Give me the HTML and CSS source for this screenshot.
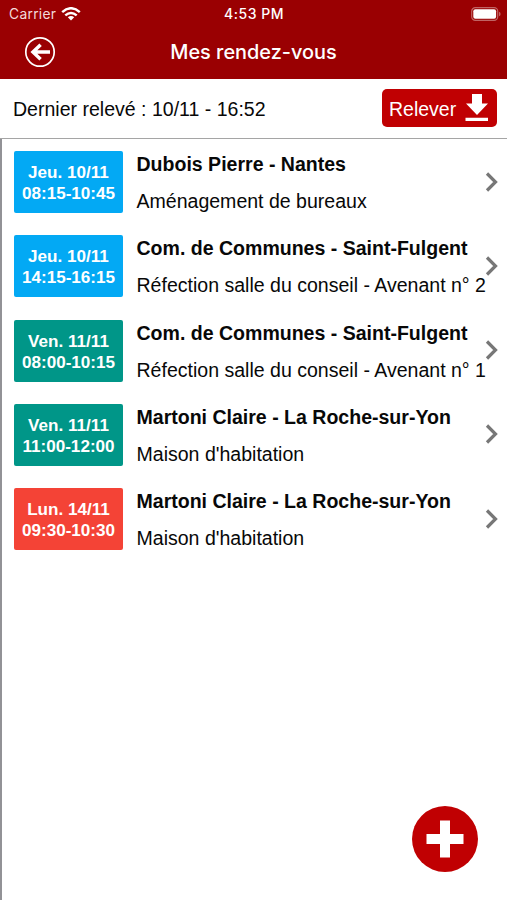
FILE: index.html
```html
<!DOCTYPE html>
<html lang="fr">
<head>
<meta charset="utf-8">
<title>Mes rendez-vous</title>
<link rel="stylesheet" href="styles.css">
</head>
<body>
<header class="header">
  <div class="status">
    <div class="carrier"><span class="carrier-name">Carrier</span>
      <svg class="wifi" width="20" height="14" viewBox="0 0 20 14" fill="none" stroke="#fff" stroke-width="2.5"><path d="M1.2 5.1Q10-2.6 18.8 5.1M4.3 8.4Q10 3.5 15.7 8.4"/><path d="M10 13.4L6.8 10.3Q10 7.7 13.2 10.3Z" fill="#fff" stroke="none"/></svg>
    </div>
    <span class="clock">4:53 PM</span>
    <svg class="battery" width="30" height="14" viewBox="0 0 30 14"><rect x=".7" y=".7" width="26" height="12.6" rx="3.6" fill="none" stroke="#c06464" stroke-width="1.2"/><rect x="2.3" y="2.3" width="22.8" height="9.4" rx="2" fill="#fff"/><path d="M28 4.7q1.6.6 1.6 2.3T28 9.300z" fill="#c06464"/></svg>
  </div>
  <nav class="nav">
    <svg class="back" width="32" height="32" viewBox="0 0 32 32" fill="none" stroke="#fff"><circle cx="16" cy="16" r="14.2" stroke-width="1.7"/><path d="M26 16H9M16.600 8.800L9 16L16.600 23.200" stroke-width="3.500"/></svg>
    <h1 class="title">Mes rendez-vous</h1>
  </nav>
</header>
<section class="sync">
  <span class="sync-label">Dernier relevé : 10/11 - 16:52</span>
  <button class="sync-button"><span>Relever</span>
    <svg width="24" height="28" viewBox="0 0 24 28" fill="#fff"><path d="M7 0H17V9.500H23L12 21L1 9.500H7ZM.5 23.700H23V27H.5Z"/></svg>
  </button>
</section>
<main class="list">
  <article class="row">
    <div class="slot blue"><span>Jeu. 10/11</span><span>08:15-10:45</span></div>
    <div class="info"><h2>Dubois Pierre - Nantes</h2><p>Aménagement de bureaux</p></div>
    <svg class="chevron" viewBox="0 0 14 20"><path d="M2 1.500L10.500 10L2 18.500"/></svg>
  </article>
  <article class="row">
    <div class="slot blue"><span>Jeu. 10/11</span><span>14:15-16:15</span></div>
    <div class="info"><h2>Com. de Communes - Saint-Fulgent</h2><p>Réfection salle du conseil - Avenant n° 2</p></div>
    <svg class="chevron" viewBox="0 0 14 20"><path d="M2 1.500L10.500 10L2 18.500"/></svg>
  </article>
  <article class="row">
    <div class="slot green"><span>Ven. 11/11</span><span>08:00-10:15</span></div>
    <div class="info"><h2>Com. de Communes - Saint-Fulgent</h2><p>Réfection salle du conseil - Avenant n° 1</p></div>
    <svg class="chevron" viewBox="0 0 14 20"><path d="M2 1.500L10.500 10L2 18.500"/></svg>
  </article>
  <article class="row">
    <div class="slot green"><span>Ven. 11/11</span><span>11:00-12:00</span></div>
    <div class="info"><h2>Martoni Claire - La Roche-sur-Yon</h2><p>Maison d'habitation</p></div>
    <svg class="chevron" viewBox="0 0 14 20"><path d="M2 1.500L10.500 10L2 18.500"/></svg>
  </article>
  <article class="row">
    <div class="slot red"><span>Lun. 14/11</span><span>09:30-10:30</span></div>
    <div class="info"><h2>Martoni Claire - La Roche-sur-Yon</h2><p>Maison d'habitation</p></div>
    <svg class="chevron" viewBox="0 0 14 20"><path d="M2 1.500L10.500 10L2 18.500"/></svg>
  </article>
</main>
<button class="add" aria-label="Ajouter"><svg width="38" height="38" viewBox="0 0 38 38" fill="#fff"><path d="M14 .5H24V14H37.500V24H24V37.500H14V24H.5V14H14Z"/></svg></button>
</body>
</html>
```
FILE: styles.css
```css
* { box-sizing: border-box; }
body {
  margin: 0;
  height: 900px;
  display: flex;
  flex-direction: column;
  overflow: hidden;
  background: #fff;
  color: #080808;
  font-family: "Liberation Sans", Arial, sans-serif;
}
h1, h2, p { margin: 0; }
button { border: 0; padding: 0; font: inherit; color: #fff; }
svg { display: block; flex: none; }

.header { height: 79px; flex: none; background: #9a0002; color: #fff; font-family: Inter, sans-serif; }
.status {
  height: 27px;
  display: grid;
  grid-template-columns: 1fr auto 1fr;
  align-items: center;
  padding: 0 6px 0 9px;
  font-size: 13.8px;
}
.carrier { display: flex; align-items: center; gap: 5px; }
.carrier-name { color: #f3dada; letter-spacing: .3px; }
.clock { font-weight: 500; font-size: 14px; letter-spacing: .55px; margin-right: 2px; }
.battery { justify-self: end; }
.nav {
  height: 50px;
  display: grid;
  grid-template-columns: 1fr auto 1fr;
  align-items: center;
  padding: 0 24px;
}
.title { font-size: 19.9px; font-weight: 500; line-height: 24px; }

.sync {
  height: 60px;
  flex: none;
  display: flex;
  align-items: center;
  justify-content: space-between;
  padding: 0 10px 1px 13px;
  border-bottom: 1px solid #a5a5a5;
}
.sync-label { font-size: 19.55px; padding-top: 2px; }
.sync-button {
  width: 115px;
  height: 38px;
  display: flex;
  align-items: center;
  justify-content: space-between;
  padding: 0 8px 0 7px;
  border-radius: 5px;
  background: #c00002;
  font-size: 19.5px;
}
.sync-button span { padding-top: 2px; }

.list { flex: 1; border-left: 2px solid #929296; padding-top: 12px; }
.row { height: 84.25px; display: flex; align-items: flex-start; padding-left: 12px; }
.slot {
  width: 109px;
  height: 62px;
  flex: none;
  display: flex;
  flex-direction: column;
  align-items: center;
  justify-content: center;
  padding-top: 2px;
  border-radius: 2px;
  color: #fff;
  font-size: 17.1px;
  font-weight: 700;
  line-height: 21px;
}
.blue { background: #03a9f4; }
.green { background: #009688; }
.red { background: #f44336; }
.info { width: 351px; margin-left: 13.500px; flex: none; white-space: nowrap; font-size: 19.55px; }
.info h2 { font-size: 19.55px; line-height: 26px; }
.info p { margin-top: 11px; line-height: 26px; }
.chevron { width: 14px; height: 20px; margin: 20.500px 0 0 -2.500px; }
.chevron path { fill: none; stroke: #777; stroke-width: 3.2; }

.add {
  position: fixed;
  right: 29px;
  bottom: 28px;
  width: 66px;
  height: 66px;
  display: grid;
  place-items: center;
  border-radius: 50%;
  background: #c00002;
}
```
